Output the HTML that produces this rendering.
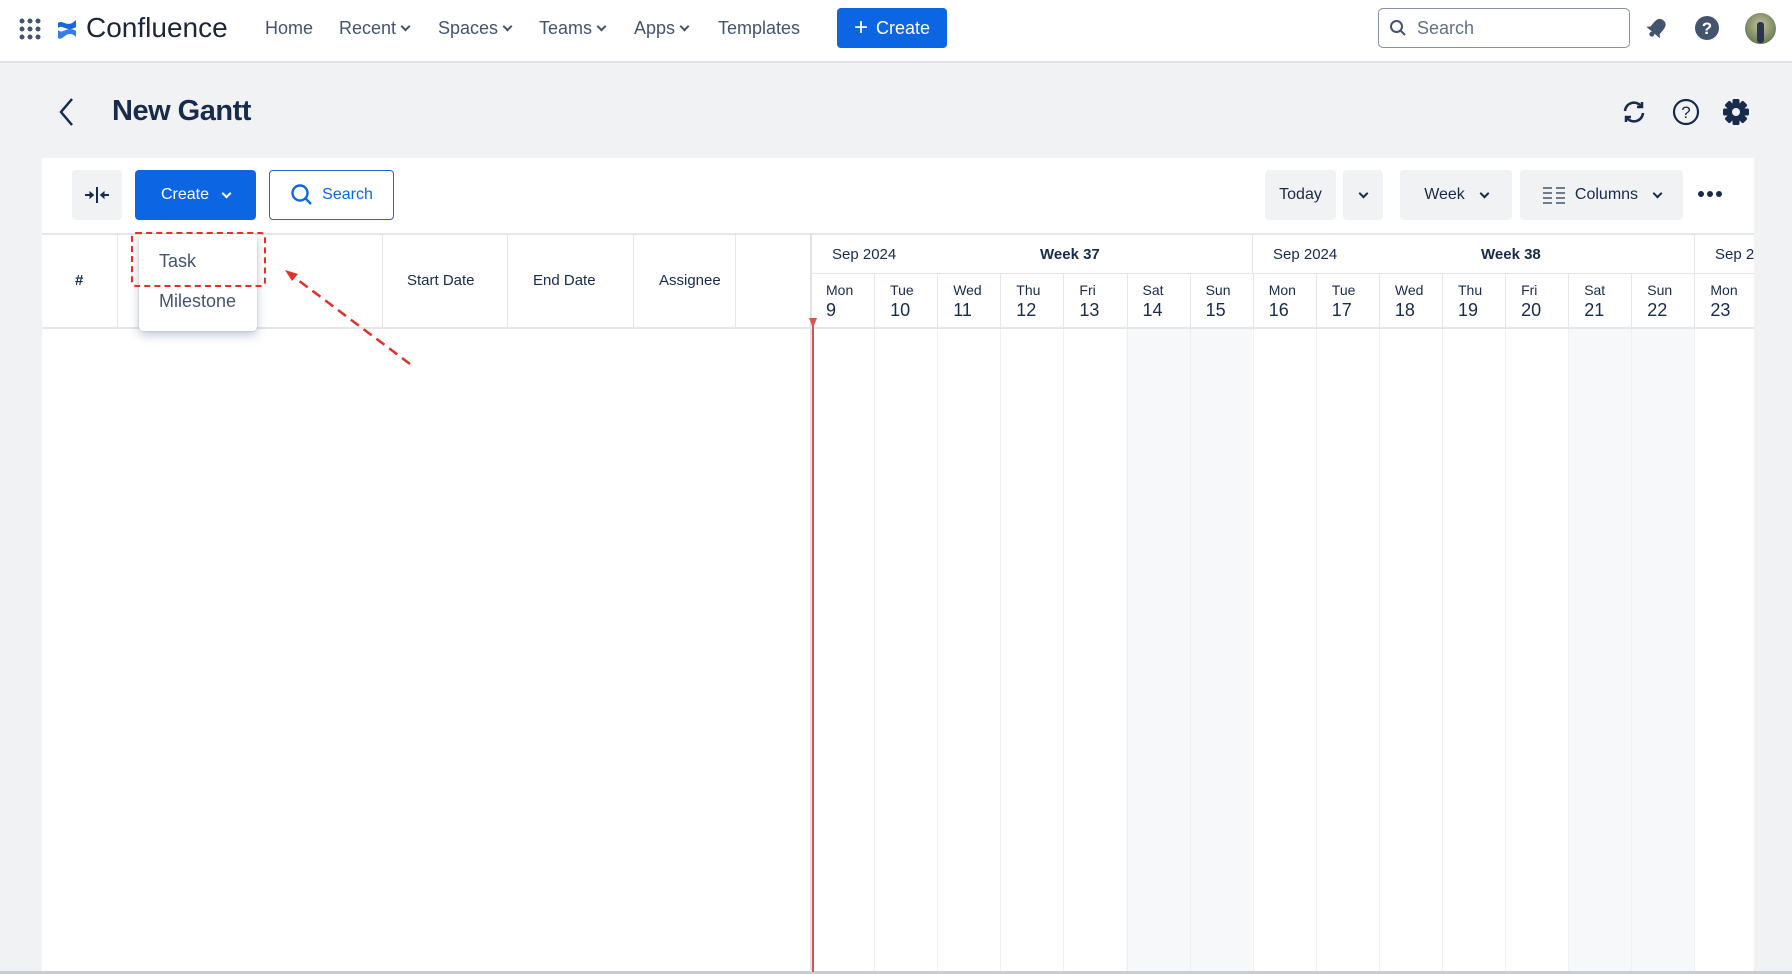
<!DOCTYPE html>
<html><head><meta charset="utf-8"><style>
*{box-sizing:border-box;margin:0;padding:0}
body{width:1792px;height:974px;overflow:hidden;background:#f1f2f4;font-family:"Liberation Sans",Arial,sans-serif;color:#172b4d;position:relative}
.abs{position:absolute}
.nav{left:0;top:0;width:1792px;height:63px;background:#fff;border-bottom:2px solid #dfe1e6}
.nl{top:18px;font-size:18px;color:#44546f}
.chev{display:inline-block;width:7px;height:7px;border-right:2px solid #44546f;border-bottom:2px solid #44546f;transform:rotate(45deg);margin-left:6px;position:relative;top:-4px}
.btn{border-radius:4px;display:flex;align-items:center;justify-content:center;font-size:16px}
.gray{background:#f1f2f4;color:#172b4d}
.hd{font-size:15px;color:#172b4d;top:272px}
.vl{width:1px;background:#e4e6ea}
.day{position:absolute;top:274px;height:54px;border-left:1px solid #e4e6ea;padding-left:15px;font-size:14px;color:#172b4d;line-height:17px;padding-top:8px}
.day b{display:block;font-weight:normal;font-size:18px;margin-top:3px}
</style></head><body>
<div class="abs nav"></div>
<svg class="abs" style="left:19px;top:18px" width="22" height="22" viewBox="0 0 22 22" fill="#44546f">
<circle cx="3" cy="3" r="2.5"/><circle cx="11" cy="3" r="2.5"/><circle cx="19" cy="3" r="2.5"/>
<circle cx="3" cy="11" r="2.5"/><circle cx="11" cy="11" r="2.5"/><circle cx="19" cy="11" r="2.5"/>
<circle cx="3" cy="19" r="2.5"/><circle cx="11" cy="19" r="2.5"/><circle cx="19" cy="19" r="2.5"/></svg>
<svg class="abs" style="left:57px;top:18px" width="20" height="22" viewBox="0 0 20 22"><path d="M1 5 C6 1,10 11,19 2 L19 9 C10 15,6 6,1 10Z" fill="#1868db"/><path d="M1 20 C6 24,10 10,19 19 L19 13 C10 7,6 17,1 12Z" fill="#357de8"/></svg>
<div class="abs" style="left:86px;top:12px;font-size:28px;color:#1d2639">Confluence</div>
<div class="abs nl" style="left:265px">Home</div>
<div class="abs nl" style="left:339px">Recent<span class="chev"></span></div>
<div class="abs nl" style="left:438px">Spaces<span class="chev"></span></div>
<div class="abs nl" style="left:539px">Teams<span class="chev"></span></div>
<div class="abs nl" style="left:634px">Apps<span class="chev"></span></div>
<div class="abs nl" style="left:718px">Templates</div>
<div class="abs btn" style="left:837px;top:8px;width:110px;height:40px;background:#0c66e4;color:#fff;font-size:18px"><span style="font-size:24px;margin-right:8px;line-height:18px">+</span>Create</div>
<div class="abs" style="left:1378px;top:8px;width:252px;height:40px;border:1.5px solid #8590a2;border-radius:5px"></div>
<svg class="abs" style="left:1389px;top:19px" width="18" height="18" viewBox="0 0 18 18" fill="none" stroke="#44546f" stroke-width="2"><circle cx="7.5" cy="7.5" r="5.5"/><path d="M11.5 11.5L16 16"/></svg>
<div class="abs" style="left:1417px;top:18px;font-size:18px;color:#626f86">Search</div>
<svg class="abs" style="left:1645px;top:16px" width="24" height="24" viewBox="0 0 24 24" fill="#44546f"><g transform="rotate(40 12 12)"><path d="M12 2 C7 2 6 6 6 10 L6 15 L3 18 L21 18 L18 15 L18 10 C18 6 17 2 12 2Z"/><circle cx="12" cy="20" r="2.5"/></g></svg>
<svg class="abs" style="left:1694px;top:15px" width="26" height="26" viewBox="0 0 26 26"><circle cx="13" cy="13" r="12" fill="#44546f"/><text x="13" y="19" text-anchor="middle" font-size="17" font-weight="bold" fill="#fff" font-family="Liberation Sans">?</text></svg>
<div class="abs" style="left:1745px;top:13px;width:31px;height:31px;border-radius:50%;background:radial-gradient(circle at 50% 40%,#c8c0a0,#7a8a60 60%,#4a5a40)"></div>
<div class="abs" style="left:1757px;top:22px;width:7px;height:21px;background:#2a3550;border-radius:3px"></div>

<svg class="abs" style="left:58px;top:97px" width="16" height="30" viewBox="0 0 16 30" fill="none" stroke="#172b4d" stroke-width="2.5"><path d="M14 2 L3 15 L14 28"/></svg>
<div class="abs" style="left:112px;top:95px;font-size:29px;font-weight:600;color:#172b4d;letter-spacing:-0.5px">New Gantt</div>
<svg class="abs" style="left:1621px;top:99px" width="26" height="26" viewBox="0 0 26 26" fill="none" stroke="#172b4d" stroke-width="2.5"><path d="M4 12 A9 9 0 0 1 20 7"/><path d="M21 3 L21 8 L16 8"/><path d="M22 14 A9 9 0 0 1 6 19"/><path d="M5 23 L5 18 L10 18"/></svg>
<svg class="abs" style="left:1672px;top:98px" width="28" height="28" viewBox="0 0 28 28"><circle cx="14" cy="14" r="12" fill="none" stroke="#172b4d" stroke-width="2.2"/><text x="14" y="20" text-anchor="middle" font-size="17" fill="#172b4d" font-family="Liberation Sans">?</text></svg>
<svg class="abs" style="left:1722px;top:98px" width="28" height="28" viewBox="0 0 28 28"><g fill="#172b4d" transform="translate(14 14)"><circle r="9"/><rect x="-3.5" y="-13" width="7" height="26" rx="1.5"/><rect x="-3.5" y="-13" width="7" height="26" rx="1.5" transform="rotate(45)"/><rect x="-3.5" y="-13" width="7" height="26" rx="1.5" transform="rotate(90)"/><rect x="-3.5" y="-13" width="7" height="26" rx="1.5" transform="rotate(135)"/></g><circle cx="14" cy="14" r="4" fill="#f1f2f4"/></svg>

<div class="abs" style="left:42px;top:158px;width:1712px;height:814px;background:#fff"></div>
<div class="abs" style="left:0;top:971px;width:1792px;height:3px;background:#c9ccd1"></div>

<div class="abs btn gray" style="left:72px;top:170px;width:50px;height:50px">
<svg width="26" height="20" viewBox="0 0 26 20" fill="#172b4d" stroke="#172b4d" stroke-width="2"><path d="M13 2V18" /><path d="M1 10H9" /><path d="M6 7L9.5 10L6 13Z" stroke-width="1"/><path d="M25 10H17"/><path d="M20 7L16.5 10L20 13Z" stroke-width="1"/></svg></div>
<div class="abs btn" style="left:135px;top:170px;width:121px;height:50px;background:#0c66e4;color:#fff">Create<span class="chev" style="border-color:#fff;margin-left:14px;top:-2px"></span></div>
<div class="abs btn" style="left:269px;top:170px;width:125px;height:50px;border:1.5px solid #1868db;color:#0c66e4">
<svg width="24" height="24" viewBox="0 0 24 24" fill="none" stroke="#0c66e4" stroke-width="2.4" style="margin-right:8px"><circle cx="10" cy="10" r="7.5"/><path d="M15.5 15.5L21 21"/></svg>Search</div>

<div class="abs btn gray" style="left:1265px;top:170px;width:71px;height:50px">Today</div>
<div class="abs btn gray" style="left:1343px;top:170px;width:40px;height:50px"><span class="chev" style="border-color:#172b4d;margin:0;top:-2px"></span></div>
<div class="abs btn gray" style="left:1400px;top:170px;width:112px;height:50px">Week<span class="chev" style="border-color:#172b4d;margin-left:16px;top:-2px"></span></div>
<div class="abs btn gray" style="left:1520px;top:170px;width:163px;height:50px">
<svg width="24" height="18" viewBox="0 0 24 18" stroke="#44546f" stroke-width="1.6" style="margin-right:9px"><path d="M1 2H10M1 7H10M1 12H10M1 17H10M14 2H23M14 7H23M14 12H23M14 17H23"/></svg>Columns<span class="chev" style="border-color:#172b4d;margin-left:16px;top:-2px"></span></div>
<svg class="abs" style="left:1697px;top:190px" width="26" height="8" viewBox="0 0 26 8" fill="#172b4d"><circle cx="4" cy="4" r="3"/><circle cx="13" cy="4" r="3"/><circle cx="22" cy="4" r="3"/></svg>

<div class="abs" style="left:42px;top:233px;width:1712px;height:2px;background:#e4e6ea"></div>
<div class="abs" style="left:42px;top:327px;width:1712px;height:2px;background:#e4e6ea"></div>
<div class="abs vl" style="left:117px;top:234px;height:94px"></div>
<div class="abs vl" style="left:382px;top:234px;height:94px"></div>
<div class="abs vl" style="left:507px;top:234px;height:94px"></div>
<div class="abs vl" style="left:633px;top:234px;height:94px"></div>
<div class="abs vl" style="left:735px;top:234px;height:94px"></div>
<div class="abs hd" style="left:75px;font-weight:bold">#</div>
<div class="abs hd" style="left:407px">Start Date</div>
<div class="abs hd" style="left:533px">End Date</div>
<div class="abs hd" style="left:659px">Assignee</div>

<div class="abs" style="left:810px;top:234px;width:2px;height:738px;background:#dfe1e6"></div>
<div class="abs" style="left:1126px;top:329px;width:126px;height:642px;background:#f7f8f9"></div>
<div class="abs" style="left:1568px;top:329px;width:126px;height:642px;background:#f7f8f9"></div>
<div class="abs" style="left:811px;top:273px;width:943px;height:1px;background:#e4e6ea"></div>
<div class="abs vl" style="left:1252px;top:234px;height:40px"></div>
<div class="abs vl" style="left:1694px;top:234px;height:40px"></div>
<div class="abs" style="left:832px;top:246px;font-size:15px">Sep 2024</div>
<div class="abs" style="left:1040px;top:246px;font-size:15px;font-weight:bold">Week 37</div>
<div class="abs" style="left:1273px;top:246px;font-size:15px">Sep 2024</div>
<div class="abs" style="left:1481px;top:246px;font-size:15px;font-weight:bold">Week 38</div>
<div class="abs" style="left:1715px;top:246px;font-size:15px;width:39px;overflow:hidden;white-space:nowrap">Sep 2024</div>
<div id="days"></div>
<div class="abs" style="left:812px;top:320px;width:1.5px;height:652px;background:#d9534f"></div>
<svg class="abs" style="left:809px;top:318px" width="8" height="10"><path d="M0 0H8L4 10Z" fill="#d9534f"/></svg>

<div class="abs" style="left:139px;top:234px;width:118px;height:97px;background:#fff;border-radius:4px;box-shadow:0 4px 10px rgba(9,30,66,.25),0 0 1px rgba(9,30,66,.3)"></div>
<div class="abs" style="left:159px;top:251px;font-size:18px;color:#44546f">Task</div>
<div class="abs" style="left:159px;top:291px;font-size:18px;color:#44546f">Milestone</div>
<div class="abs" style="left:131px;top:232px;width:135px;height:55px;border:2.5px dashed #e0302a;border-radius:5px"></div>
<svg class="abs" style="left:0;top:0" width="500" height="400"><path d="M410 364 L290 274" stroke="#e0302a" stroke-width="2.5" stroke-dasharray="10 6" fill="none"/><path d="M285 270 L298 274 L292 281Z" fill="#e0302a"/></svg>

<script>
var d=[["Mon",9],["Tue",10],["Wed",11],["Thu",12],["Fri",13],["Sat",14],["Sun",15],["Mon",16],["Tue",17],["Wed",18],["Thu",19],["Fri",20],["Sat",21],["Sun",22],["Mon",23]];
var h="";for(var i=0;i<d.length;i++){var x=811+i*63.1;var w=Math.min(63.1,1754-x);
h+='<div class="day" style="left:'+x+'px;width:'+w+'px;'+(i==0?'border-left:none;':'')+'">'+d[i][0]+'<b>'+d[i][1]+'</b></div>';
if(i>0)h+='<div class="abs vl" style="left:'+x+'px;top:329px;height:642px;background:#eef0f2"></div>';}
document.getElementById("days").innerHTML=h;
</script>
</body></html>
